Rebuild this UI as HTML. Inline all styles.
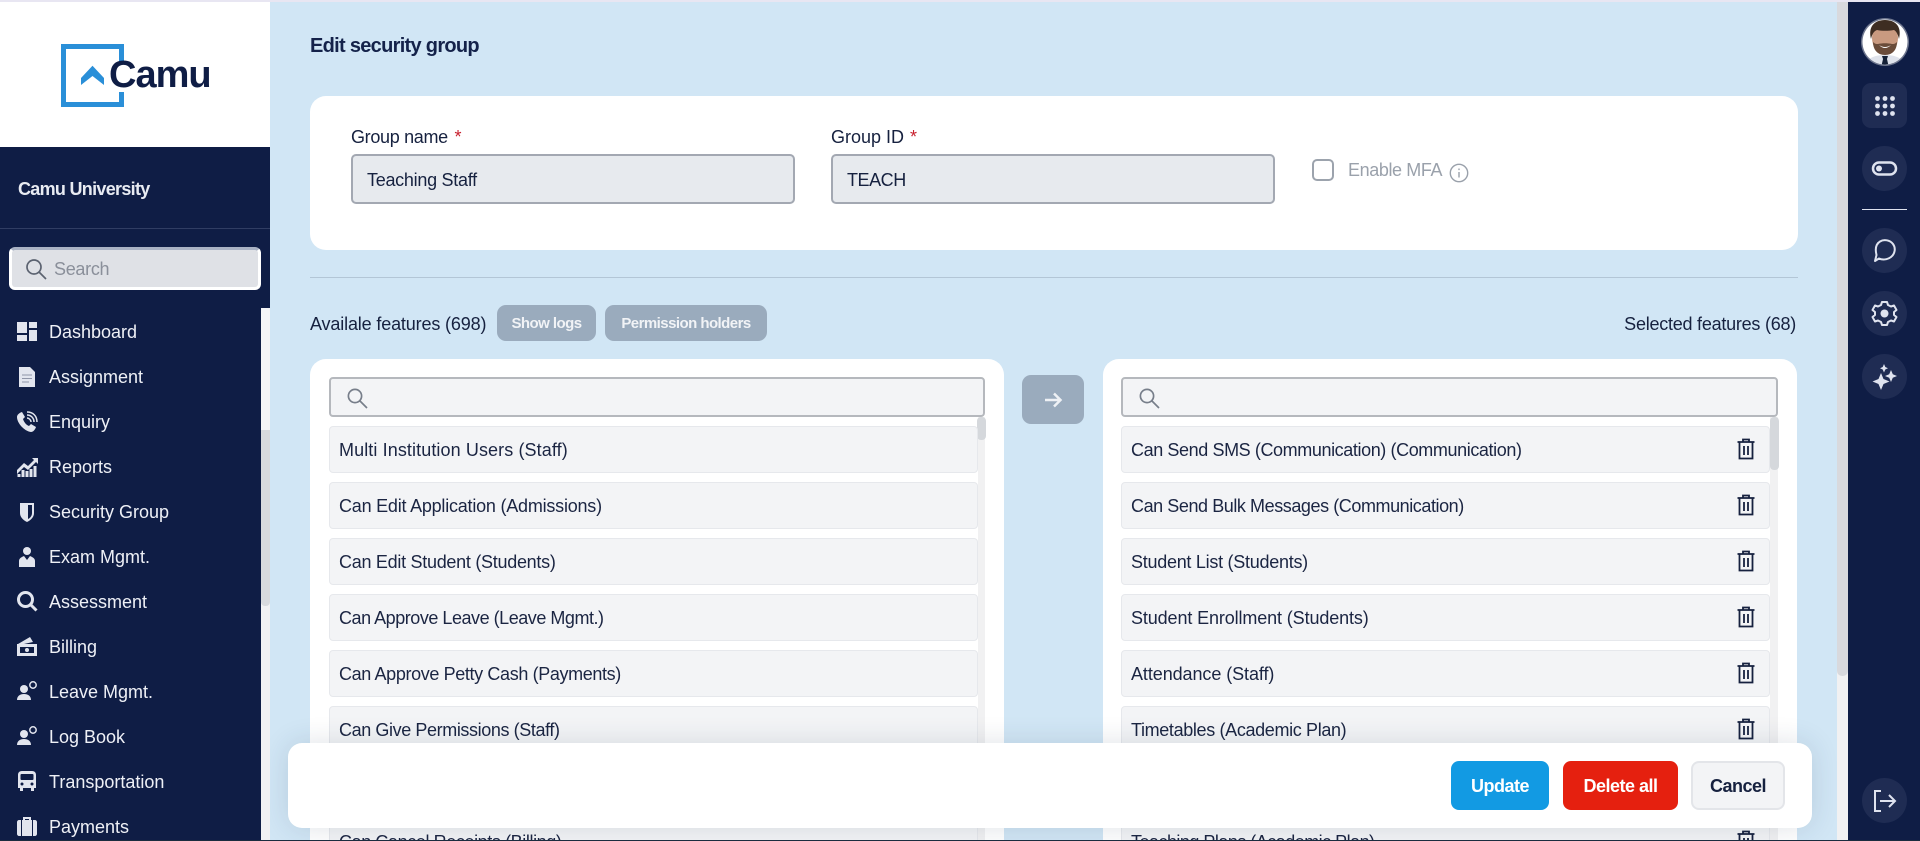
<!DOCTYPE html>
<html><head><meta charset="utf-8"><title>Edit security group</title>
<style>
*{box-sizing:border-box}
html,body{margin:0;padding:0;width:1920px;height:841px;overflow:hidden;background:#d1e6f5;font-family:"Liberation Sans",sans-serif;color:#16213f}
#r{position:relative;width:1920px;height:841px;overflow:hidden;background:#d1e6f5}
.a{position:absolute}
.t{position:absolute;white-space:nowrap;line-height:20px;font-size:18px;letter-spacing:-.3px}
.m{position:absolute;left:49px;white-space:nowrap;line-height:22px;font-size:18px;color:#eef0f6}
.ic{position:absolute;left:16px;width:22px;height:22px;fill:#e2e5ee}
.card{position:absolute;background:#fff;border-radius:16px}
.in{position:absolute;background:#e7eaee;border:2px solid #a3a8b2;border-radius:5px;height:50px;top:154px;width:444px}
.s{position:absolute;top:377px;height:40px;background:#f3f4f6;border:2px solid #b5b8bd;border-radius:4px}
.it{position:absolute;width:649px;height:47px;background:#f3f4f6;border:1px solid #e6e8ec;border-radius:4px;padding:0 9px;line-height:46px;font-size:18px;white-space:nowrap;color:#1b2542}
.tr{position:absolute;left:1736px;width:20px;height:22px;fill:none;stroke:#16213f;stroke-width:1.8}
.pb{position:absolute;left:1862px;width:45px;height:45px;background:#1f2c53;border-radius:50%}
.pb svg{position:absolute;left:9px;top:9px;width:27px;height:27px}
.btn{position:absolute;top:761px;height:49px;border-radius:8px;text-align:center;line-height:51px;font-size:18px;font-weight:bold;letter-spacing:-.5px;color:#fff}
.hb{position:absolute;top:305px;height:36px;background:#9aabbd;border-radius:9px;color:#f1f3f6;font-weight:bold;font-size:15px;line-height:38px;text-align:center;letter-spacing:-.55px}
</style></head><body><div id="r">

<div class="a" style="left:0;top:0;width:1920px;height:2px;background:#e8e6f2;z-index:9"></div>

<!-- main -->
<div class="t" style="left:310px;top:36px;font-size:20px;font-weight:bold;letter-spacing:-.7px;color:#14224a">Edit security group</div>

<div class="card" style="left:310px;top:96px;width:1488px;height:154px"></div>
<div class="t" style="left:351px;top:127px;letter-spacing:-.32px">Group name <span style="color:#c8202e;margin-left:2px">*</span></div>
<div class="in" style="left:351px"></div>
<div class="t" style="left:367px;top:170px;letter-spacing:-.28px">Teaching Staff</div>
<div class="t" style="left:831px;top:127px;letter-spacing:0">Group ID <span style="color:#c8202e;margin-left:1px">*</span></div>
<div class="in" style="left:831px"></div>
<div class="t" style="left:847px;top:170px;letter-spacing:-.45px">TEACH</div>
<div class="a" style="left:1312px;top:159px;width:22px;height:22px;border:2px solid #9ca3ad;border-radius:5px;background:#fff"></div>
<div class="t" style="left:1348px;top:160px;color:#9aa1ab;letter-spacing:-.4px">Enable MFA</div>
<svg class="a" style="left:1449px;top:163px" width="20" height="20" viewBox="0 0 20 20" fill="none" stroke="#9aa1ab" stroke-width="1.4"><circle cx="10" cy="10" r="8.7"/><path d="M10 9v5.5M10 5.5v1.6"/></svg>

<div class="a" style="left:310px;top:277px;width:1488px;height:1px;background:#b3c6d6"></div>

<div class="t" style="left:310px;top:314px;letter-spacing:-.15px">Availale features (698)</div>
<div class="hb" style="left:497px;width:99px">Show logs</div>
<div class="hb" style="left:605px;width:162px">Permission holders</div>
<div class="t" style="right:124px;top:314px;letter-spacing:-.24px">Selected features (68)</div>

<!-- left panel -->
<div class="card" style="left:310px;top:359px;width:694px;height:520px"></div>
<div class="s" style="left:329px;width:656px"></div>
<svg class="a" style="left:346px;top:387px" width="22" height="22" viewBox="0 0 22 22" fill="none" stroke="#777e8a" stroke-width="1.7"><circle cx="9" cy="9" r="6.6"/><path d="M14 14l7 7"/></svg>
<div class="a" style="left:978px;top:417px;width:7px;height:424px;background:#f1f1f2"></div>
<div class="a" style="left:977px;top:417px;width:9px;height:23px;background:#d5d8dc;border-radius:4px"></div>
<div class="it" style="left:329px;top:426px;letter-spacing:.1px">Multi Institution Users (Staff)</div>
<div class="it" style="left:329px;top:482px;letter-spacing:-.22px">Can Edit Application (Admissions)</div>
<div class="it" style="left:329px;top:538px;letter-spacing:-.28px">Can Edit Student (Students)</div>
<div class="it" style="left:329px;top:594px;letter-spacing:-.47px">Can Approve Leave (Leave Mgmt.)</div>
<div class="it" style="left:329px;top:650px;letter-spacing:-.37px">Can Approve Petty Cash (Payments)</div>
<div class="it" style="left:329px;top:706px;letter-spacing:-.4px">Can Give Permissions (Staff)</div>
<div class="it" style="left:329px;top:762px"></div>
<div class="it" style="left:329px;top:818px;letter-spacing:-.4px">Can Cancel Receipts (Billing)</div>

<!-- arrow -->
<div class="a" style="left:1022px;top:375px;width:62px;height:49px;background:#9aabbd;border-radius:9px"></div>
<svg class="a" style="left:1043px;top:390px" width="20" height="20" viewBox="0 0 20 20" fill="none" stroke="#eef1f5" stroke-width="2.500"><path d="M2 10h15M11 3.500l6.500 6.500-6.500 6.500"/></svg>

<!-- right panel -->
<div class="card" style="left:1103px;top:359px;width:694px;height:520px"></div>
<div class="s" style="left:1121px;width:657px"></div>
<svg class="a" style="left:1138px;top:387px" width="22" height="22" viewBox="0 0 22 22" fill="none" stroke="#777e8a" stroke-width="1.7"><circle cx="9" cy="9" r="6.6"/><path d="M14 14l7 7"/></svg>
<div class="a" style="left:1770px;top:417px;width:8px;height:424px;background:#f1f1f2"></div>
<div class="a" style="left:1770px;top:417px;width:9px;height:53px;background:#d5d8dc;border-radius:4px"></div>
<div class="it" style="left:1121px;top:426px;letter-spacing:-.4px">Can Send SMS (Communication) (Communication)</div>
<div class="it" style="left:1121px;top:482px;letter-spacing:-.43px">Can Send Bulk Messages (Communication)</div>
<div class="it" style="left:1121px;top:538px;letter-spacing:-.27px">Student List (Students)</div>
<div class="it" style="left:1121px;top:594px;letter-spacing:-.12px">Student Enrollment (Students)</div>
<div class="it" style="left:1121px;top:650px;letter-spacing:-.08px">Attendance (Staff)</div>
<div class="it" style="left:1121px;top:706px;letter-spacing:-.35px">Timetables (Academic Plan)</div>
<div class="it" style="left:1121px;top:762px"></div>
<div class="it" style="left:1121px;top:818px;letter-spacing:-.52px">Teaching Plans (Academic Plan)</div>

<svg class="tr" style="top:438px" viewBox="0 0 20 22"><path d="M1.500 4h17M7 4V1.500h6V4M3.500 4v16.500h13V4M8 8v9M12 8v9"/></svg>
<svg class="tr" style="top:494px" viewBox="0 0 20 22"><path d="M1.500 4h17M7 4V1.500h6V4M3.500 4v16.500h13V4M8 8v9M12 8v9"/></svg>
<svg class="tr" style="top:550px" viewBox="0 0 20 22"><path d="M1.500 4h17M7 4V1.500h6V4M3.500 4v16.500h13V4M8 8v9M12 8v9"/></svg>
<svg class="tr" style="top:606px" viewBox="0 0 20 22"><path d="M1.500 4h17M7 4V1.500h6V4M3.500 4v16.500h13V4M8 8v9M12 8v9"/></svg>
<svg class="tr" style="top:662px" viewBox="0 0 20 22"><path d="M1.500 4h17M7 4V1.500h6V4M3.500 4v16.500h13V4M8 8v9M12 8v9"/></svg>
<svg class="tr" style="top:718px" viewBox="0 0 20 22"><path d="M1.500 4h17M7 4V1.500h6V4M3.500 4v16.500h13V4M8 8v9M12 8v9"/></svg>
<svg class="tr" style="top:830px" viewBox="0 0 20 22"><path d="M1.500 4h17M7 4V1.500h6V4M3.500 4v16.500h13V4M8 8v9M12 8v9"/></svg>

<!-- footer -->
<div class="a" style="left:288px;top:743px;width:1524px;height:85px;background:#fff;border-radius:14px;box-shadow:0 0 28px rgba(30,50,80,.14)"></div>
<div class="btn" style="left:1451px;width:98px;background:#129ae3">Update</div>
<div class="btn" style="left:1563px;width:115px;background:#e5200f">Delete all</div>
<div class="btn" style="left:1691px;width:94px;background:#f3f4f6;border:2px solid #e3e5e9;color:#16213f;line-height:47px">Cancel</div>

<!-- main scrollbar -->
<div class="a" style="left:1837px;top:2px;width:11px;height:839px;background:#f1f1f2"></div>
<div class="a" style="left:1837px;top:2px;width:11px;height:674px;background:#d8d9dd;border-radius:0 0 5px 5px"></div>

<!-- left sidebar -->
<div class="a" style="left:0;top:0;width:270px;height:147px;background:#fff"></div>
<div class="a" style="left:0;top:147px;width:270px;height:694px;background:#0f1d45"></div>
<svg class="a" style="left:0;top:0" width="130" height="115" viewBox="0 0 130 115"><path d="M121.500 62V46.500H63.500V104.500H121.500V92" fill="none" stroke="#2a8fd8" stroke-width="5"/><path d="M92.500 65.700L104 78V85L92.500 76L81 85V78Z" fill="#2a8fd8"/></svg>
<div class="a" style="left:109px;top:50px;font-size:38px;line-height:50px;font-weight:bold;color:#0f1d45;letter-spacing:-1px;white-space:nowrap">Camu</div>

<div class="a" style="left:18px;top:178px;font-size:18px;line-height:22px;font-weight:bold;color:#e8ebf2;letter-spacing:-.7px;white-space:nowrap">Camu University</div>
<div class="a" style="left:0;top:228px;width:270px;height:1px;background:#303d63"></div>
<div class="a" style="left:9px;top:247px;width:252px;height:43px;background:#dfe1e6;border:3px solid #fff;border-top-color:#a9b2c4;border-radius:6px"></div>
<svg class="a" style="left:25px;top:258px" width="22" height="22" viewBox="0 0 22 22" fill="none" stroke="#5b6270" stroke-width="1.700"><circle cx="9" cy="9" r="7"/><path d="M14 14l7 7"/></svg>
<div class="a" style="left:54px;top:259px;font-size:18px;line-height:20px;color:#8a8f9a;white-space:nowrap;letter-spacing:-.3px">Search</div>

<div class="a" style="left:261px;top:308px;width:9px;height:533px;background:#f1f1f3"></div>
<div class="a" style="left:261px;top:428px;width:9px;height:178px;background:#d8dade;border-radius:0 0 4px 4px"></div>
<div class="a" style="left:261px;top:308px;width:9px;height:122px;background:#f5f5f7;border-radius:4px 4px 0 0"></div>

<svg class="ic" style="top:321px" viewBox="0 0 22 22"><path d="M1 1h10v11H1zM13 1h8v6h-8zM13 9h8v11h-8zM1 14h10v6H1z"/></svg>
<div class="m" style="top:321px">Dashboard</div>
<svg class="ic" style="top:366px" viewBox="0 0 22 22"><path d="M3 1h11l5 5v15H3z"/><path d="M6 9h10M6 12.500h10M6 16h7" stroke="#8f95a8" stroke-width="1"/></svg>
<div class="m" style="top:366px">Assignment</div>
<svg class="ic" style="top:411px" viewBox="0 0 22 22"><path d="M6 1l3 5-2 2c1 3 3 6 6 7l2-2 5 3c-1 3-3 5-5 5C8 20 1 12 1 6c0-2 2-4 5-5z"/><path d="M11 4c4 0 7 3 7 7M11 1c6 0 10 4 10 10M11 7c2 0 4 2 4 4" fill="none" stroke="#e2e5ee" stroke-width="1.500"/></svg>
<div class="m" style="top:411px">Enquiry</div>
<svg class="ic" style="top:456px" viewBox="0 0 22 22"><path d="M1 14l7-7 4 3 6-6-2-2h6v6l-2-2-8 8-4-3-7 7z"/><path d="M1.500 21v-3h3v3zM5.500 21v-7h3v7zM9.500 21v-6h3v6zM13.500 21v-8h3v8zM17.500 21V10h3v11z"/></svg>
<div class="m" style="top:456px">Reports</div>
<svg class="ic" style="top:501px" viewBox="0 0 22 22"><path d="M4 2h14v10c0 4-3 7-7 9-4-2-7-5-7-9z"/><path d="M12 4h4v8c0 3-2 5-4 6z" fill="#0f1d45"/></svg>
<div class="m" style="top:501px">Security Group</div>
<svg class="ic" style="top:546px" viewBox="0 0 22 22"><circle cx="11" cy="5" r="4"/><path d="M3 21v-6c0-3 3-4 5-5l3 4 3-4c2 1 5 2 5 5v6z"/></svg>
<div class="m" style="top:546px">Exam Mgmt.</div>
<svg class="ic" style="top:590px;fill:none;stroke:#e2e5ee;stroke-width:3" viewBox="0 0 22 22"><circle cx="9.500" cy="9.500" r="7"/><path d="M14.500 14.500l6 6"/></svg>
<div class="m" style="top:591px">Assessment</div>
<svg class="ic" style="top:635px" viewBox="0 0 22 22"><path d="M2 9l12-7 3 5-9 2zM1 9h20v12H1z"/><rect x="4" y="12" width="14" height="6" fill="#0f1d45"/><circle cx="11" cy="15" r="2"/></svg>
<div class="m" style="top:636px">Billing</div>
<svg class="ic" style="top:680px" viewBox="0 0 22 22"><circle cx="8" cy="9" r="4"/><path d="M1 20c0-4 3-6 7-6s7 2 7 6z"/><circle cx="17" cy="5" r="3.200" fill="none" stroke="#e2e5ee" stroke-width="1.500"/></svg>
<div class="m" style="top:681px">Leave Mgmt.</div>
<svg class="ic" style="top:725px" viewBox="0 0 22 22"><circle cx="8" cy="9" r="4"/><path d="M1 20c0-4 3-6 7-6s7 2 7 6z"/><circle cx="17" cy="5" r="3.200" fill="none" stroke="#e2e5ee" stroke-width="1.500"/></svg>
<div class="m" style="top:726px">Log Book</div>
<svg class="ic" style="top:770px" viewBox="0 0 22 22"><path d="M6 1h10c3 0 4 2 4 4v13h-2v3h-3v-3H7v3H4v-3H2V5c0-2 1-4 4-4z"/><rect x="4.500" y="4" width="13" height="6" rx="1" fill="#0f1d45"/><circle cx="6" cy="14" r="1.500" fill="#0f1d45"/><circle cx="16" cy="14" r="1.500" fill="#0f1d45"/></svg>
<div class="m" style="top:771px">Transportation</div>
<svg class="ic" style="top:815px" viewBox="0 0 22 22"><path d="M7 5V2h8v3h-2V4H9v1zM1 7c0-1 1-2 2-2h2v16H3c-1 0-2-1-2-2zM6 5h10v16H6zM17 5h2c1 0 2 1 2 2v12c0 1-1 2-2 2h-2z"/></svg>
<div class="m" style="top:816px">Payments</div>

<!-- right rail -->
<div class="a" style="left:1848px;top:2px;width:72px;height:839px;background:#0f1d45"></div>
<svg class="a" style="left:1858px;top:15px" width="54" height="54" viewBox="0 0 54 54">
<circle cx="27" cy="27" r="24" fill="#fff" opacity=".4"/>
<clipPath id="av"><circle cx="27" cy="27" r="22.500"/></clipPath>
<g clip-path="url(#av)"><rect width="54" height="54" fill="#fff"/>
<path d="M6 52c2-9 11-12 21-12s19 3 21 12z" fill="#dfe3ec"/>
<ellipse cx="27" cy="23" rx="13" ry="16" fill="#c99a80"/>
<path d="M13 24c-3-12 3-19 14-19s17 7 14 19c-1-5-3-8-5-9-6 1-12 1-17 0-3 1-5 4-6 9z" fill="#3e2d22"/>
<path d="M15 27c2 2 3 2 5 2 4-1 10-1 14 0 2 0 3 0 5-2 0 7-4 13-12 13s-12-6-12-13z" fill="#6a4c3a"/>
<path d="M21 30q6 4 12 0-6 6-12 0z" fill="#fff"/>
<path d="M24 41h6l-1 3 2 9h-8l2-9z" fill="#142036"/></g></svg>
<div class="a" style="left:1862px;top:83px;width:45px;height:45px;background:#1f2c53;border-radius:9px"></div>
<svg class="a" style="left:1874px;top:95px" width="22" height="22" viewBox="0 0 22 22" fill="#dfe3ef"><circle cx="3.500" cy="3.500" r="2.400"/><circle cx="11" cy="3.500" r="2.400"/><circle cx="18.500" cy="3.500" r="2.400"/><circle cx="3.500" cy="11" r="2.400"/><circle cx="11" cy="11" r="2.400"/><circle cx="18.500" cy="11" r="2.400"/><circle cx="3.500" cy="18.500" r="2.400"/><circle cx="11" cy="18.500" r="2.400"/><circle cx="18.500" cy="18.500" r="2.400"/></svg>
<div class="pb" style="top:146px"><svg viewBox="0 0 27 27" fill="none" stroke="#dfe3ef" stroke-width="2.500"><rect x="2" y="7.500" width="23" height="12" rx="6"/><circle cx="8" cy="13.500" r="3" fill="#dfe3ef" stroke="none"/></svg></div>
<div class="a" style="left:1862px;top:209px;width:45px;height:1px;background:#dfe3ef"></div>
<div class="pb" style="top:228px"><svg viewBox="0 0 27 27" fill="none" stroke="#dfe3ef" stroke-width="2"><path d="M4 24l1.500-6C4 12 5 7 9 4.500c4-2.500 10-1.500 13 2.500 3 4 2 10-2 13s-9 3-12 1.500z" stroke-linejoin="round"/></svg></div>
<div class="pb" style="top:291px"><svg viewBox="0 0 27 27" fill="none" stroke="#dfe3ef" stroke-width="2"><path d="M11 2h5l1 3 3 1.500 3-1 2.500 4.500-2.500 2v3l2.500 2-2.500 4.500-3-1-3 1.500-1 3h-5l-1-3-3-1.500-3 1L1.500 17 4 15v-3L1.500 10 4 5.500l3 1L10 5z" stroke-linejoin="round"/><circle cx="13.500" cy="13.500" r="4" fill="#dfe3ef" stroke="none"/></svg></div>
<div class="pb" style="top:354px"><svg viewBox="0 0 27 27" fill="#dfe3ef"><path d="M10 10l2.500 6 6 2.500-6 2.500L10 27l-2.500-6-6-2.500 6-2.500zM20 7l1.800 4.200L26 13l-4.200 1.800L20 19l-1.800-4.200L14 13l4.200-1.800zM13 1l1.300 3L17 5.300l-2.700 1.200L13 9.500l-1.300-3L9 5.300l2.700-1.300z"/></svg></div>
<div class="pb" style="top:778px"><svg viewBox="0 0 27 27" fill="none" stroke="#dfe3ef" stroke-width="2"><path d="M10 4H4v20h6M9 14h15M18 8l6 6-6 6"/></svg></div>

<div class="a" style="left:0;top:840px;width:1920px;height:1px;background:#1a2c3f;z-index:9"></div>
</div></body></html>
